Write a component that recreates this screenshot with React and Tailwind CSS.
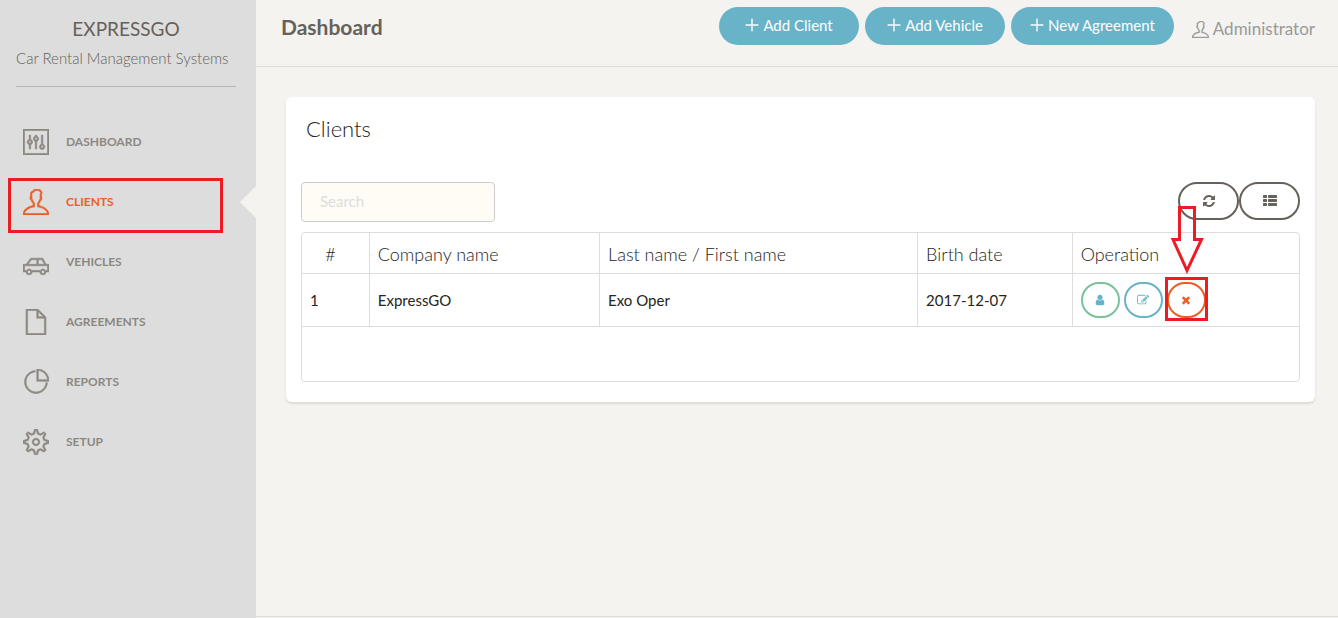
import React from "react";
import {
  TfiPanel,
  TfiUser,
  TfiCar,
  TfiFile,
  TfiPieChart,
  TfiSettings,
  TfiPlus,
} from "react-icons/tfi";

const menu = [
  { label: "DASHBOARD", Icon: TfiPanel },
  { label: "CLIENTS", Icon: TfiUser, active: true },
  { label: "VEHICLES", Icon: TfiCar },
  { label: "AGREEMENTS", Icon: TfiFile },
  { label: "REPORTS", Icon: TfiPieChart },
  { label: "SETUP", Icon: TfiSettings },
];

const actions = ["Add Client", "Add Vehicle", "New Agreement"];

const clients = [
  { id: 1, company: "ExpressGO", name: "Exo Oper", birth: "2017-12-07" },
];

const glyphs = {
  refresh:
    "M1639 1056q0 5-1 7-64 268-268 434.5t-478 166.5q-146 0-282.5-55t-243.5-157l-129 129q-19 19-45 19t-45-19-19-45v-448q0-26 19-45t45-19h448q26 0 45 19t19 45-19 45l-137 137q71 66 161 102t187 36q134 0 250-65t186-179q11-17 53-117 8-23 30-23h192q13 0 22.5 9.5t9.5 22.5zm25-800v448q0 26-19 45t-45 19h-448q-26 0-45-19t-19-45 19-45l138-138q-148-137-349-137-134 0-250 65t-186 179q-11 17-53 117-8 23-30 23h-199q-13 0-22.5-9.5t-9.5-22.5v-7q65-268 270-434.5t480-166.5q146 0 284 55.5t245 156.5l130-129q19-19 45-19t45 19 19 45z",
  list: "M512 1248v192q0 40-28 68t-68 28h-320q-40 0-68-28t-28-68v-192q0-40 28-68t68-28h320q40 0 68 28t28 68zm0-512v192q0 40-28 68t-68 28h-320q-40 0-68-28t-28-68v-192q0-40 28-68t68-28h320q40 0 68 28t28 68zm1280 512v192q0 40-28 68t-68 28h-960q-40 0-68-28t-28-68v-192q0-40 28-68t68-28h960q40 0 68 28t28 68zm-1280-1024v192q0 40-28 68t-68 28h-320q-40 0-68-28t-28-68v-192q0-40 28-68t68-28h320q40 0 68 28t28 68zm1280 512v192q0 40-28 68t-68 28h-960q-40 0-68-28t-28-68v-192q0-40 28-68t68-28h960q40 0 68 28t28 68zm0-512v192q0 40-28 68t-68 28h-960q-40 0-68-28t-28-68v-192q0-40 28-68t68-28h960q40 0 68 28t28 68z",
  user: "M1536 1399q0 109-62.5 187t-150.5 78h-854q-88 0-150.5-78t-62.5-187q0-85 8.5-160.5t31.5-152 58.5-131 94-89 134.5-34.5q131 128 313 128t313-128q76 0 134.5 34.5t94 89 58.5 131 31.5 152 8.5 160.5zm-256-887q0 159-112.5 271.5t-271.5 112.5-271.5-112.5-112.5-271.5 112.5-271.5 271.5-112.5 271.5 112.5 112.5 271.5z",
  edit: "M888 1184l116-116-152-152-116 116v56h96v96h56zm440-720q-16-16-33 1l-350 350q-17 17-1 33t33-1l350-350q17-17 1-33zm80 594v190q0 119-84.5 203.5t-203.5 84.5h-832q-119 0-203.5-84.5t-84.5-203.5v-832q0-119 84.5-203.5t203.5-84.5h832q63 0 117 25 15 7 18 23 3 17-9 29l-49 49q-14 14-32 8-23-6-45-6h-832q-66 0-113 47t-47 113v832q0 66 47 113t113 47h832q66 0 113-47t47-113v-126q0-13 9-22l64-64q15-15 35-7t20 29zm-96-738l288 288-672 672h-288v-288zm444 132l-92 92-288-288 92-92q28-28 68-28t68 28l152 152q28 28 28 68t-28 68z",
  remove:
    "M1490 1322q0 40-28 68l-136 136q-28 28-68 28t-68-28l-294-294-294 294q-28 28-68 28t-68-28l-136-136q-28-28-28-68t28-68l294-294-294-294q-28-28-28-68t28-68l136-136q28-28 68-28t68 28l294 294 294-294q28-28 68-28t68 28l136 136q28 28 28 68t-28 68l-294 294 294 294q28 28 28 68z",
};

function Glyph({ name, className }) {
  return (
    <svg viewBox="0 0 1792 1792" fill="currentColor" aria-hidden="true" className={className}>
      <path d={glyphs[name]} />
    </svg>
  );
}

function Sidebar() {
  return (
    <aside className="w-64 shrink-0 bg-[#dddddd]">
      <div className="ml-4 mr-5 border-b border-[#b5b5b5] pt-4 pb-4 text-[#66615b]">
        <div className="text-center text-[19px] leading-[26px]">EXPRESSGO</div>
        <div className="whitespace-nowrap pt-1 text-[15px] leading-6 font-light">
          Car Rental Management Systems
        </div>
      </div>
      <nav className="pt-[25px]">
        {menu.map(({ label, Icon, active }) => (
          <a
            key={label}
            href="#"
            className={
              active
                ? "relative flex h-[60px] items-center gap-[17px] pl-[23px] text-xs font-bold text-[#eb5e28]"
                : "flex h-[60px] items-center gap-[17px] pl-[23px] text-xs font-bold text-[#8c8881]"
            }
          >
            <Icon className="size-[26px] shrink-0 [stroke-width:0.4]" />
            <span>{label}</span>
            {active && (
              <>
                <span className="absolute inset-y-[14px] right-0 w-4 bg-[#f4f3ef] [clip-path:polygon(100%_0,100%_100%,0_50%)]" />
                <span className="absolute top-[6px] left-2 h-[55px] w-[215px] border-3 border-[#ed1c24]" />
              </>
            )}
          </a>
        ))}
      </nav>
    </aside>
  );
}

function Header() {
  return (
    <header className="flex h-[67px] items-start justify-between border-b border-[#dddddd] pr-[23px] pl-[25px]">
      <h1 className="pt-3 text-[21px] leading-[30px] font-bold text-[#66615b]">Dashboard</h1>
      <div className="flex items-start pt-[7px]">
        <div className="flex gap-1.5">
          {actions.map((label) => (
            <button
              key={label}
              type="button"
              className="flex h-[38px] min-w-[140px] items-center justify-center gap-1 rounded-[20px] bg-[#68b3c8] px-[19px] pb-0.5 text-[15px] text-white"
            >
              <TfiPlus className="size-[14px] [stroke-width:0.6]" />
              {label}
            </button>
          ))}
        </div>
        <a href="#" className="ml-[18px] flex h-11 items-center gap-1 text-[17px] text-[#9a9a9a]">
          <TfiUser className="size-[17px] [stroke-width:0.4]" />
          Administrator
        </a>
      </div>
    </header>
  );
}

const cell = "border-r border-b border-[#dddddd] px-2 last:border-r-0";
const head = "border-r border-b border-[#dddddd] px-2 pt-0.5 font-light last:border-r-0";

function ClientTable() {
  return (
    <div className="mt-[10px] rounded border border-[#dddddd] pb-[54px]">
      <table className="w-full table-fixed border-separate border-spacing-0 text-left text-[#252422]">
        <colgroup>
          <col className="w-[6.8%]" />
          <col className="w-[23.1%]" />
          <col className="w-[31.9%]" />
          <col className="w-[15.5%]" />
          <col />
        </colgroup>
        <thead>
          <tr className="h-[41px] text-lg leading-6">
            <th className={`${head} pr-[18px] text-center`}>#</th>
            <th className={head}>Company name</th>
            <th className={head}>Last name / First name</th>
            <th className={head}>Birth date</th>
            <th className={head}>Operation</th>
          </tr>
        </thead>
        <tbody>
          {clients.map((c) => (
            <tr key={c.id} className="h-[53px] text-[15px]">
              <td className={cell}>{c.id}</td>
              <td className={cell}>{c.company}</td>
              <td className={cell}>{c.name}</td>
              <td className={cell}>{c.birth}</td>
              <td className={cell}>
                <div className="flex gap-1">
                  <button
                    type="button"
                    aria-label="View client"
                    className="flex h-9 w-[39px] items-center justify-center rounded-[20px] border-2 border-[#7ac29a] text-[#68b3c8]"
                  >
                    <Glyph name="user" className="size-3" />
                  </button>
                  <button
                    type="button"
                    aria-label="Edit client"
                    className="flex h-9 w-[39px] items-center justify-center rounded-[20px] border-2 border-[#68b3c8] text-[#68b3c8]"
                  >
                    <Glyph name="edit" className="size-3" />
                  </button>
                  <div className="relative">
                    <button
                      type="button"
                      aria-label="Delete client"
                      className="flex h-9 w-[39px] items-center justify-center rounded-[20px] border-2 border-[#eb5e28] text-[#eb5e28]"
                    >
                      <Glyph name="remove" className="size-3" />
                    </button>
                    <span className="pointer-events-none absolute -top-[5px] -left-[2px] h-11 w-[43px] border-3 border-[#ed1c24]" />
                    <svg
                      viewBox="0 0 34 70"
                      fill="none"
                      stroke="#ed1c24"
                      strokeWidth="3"
                      aria-hidden="true"
                      className="pointer-events-none absolute -top-[78px] left-[3px] h-[70px] w-[34px]"
                    >
                      <path d="M9.5 3.500H24.500V35.500H31.500L17 66.500L3 35.500H9.500Z" />
                    </svg>
                  </div>
                </div>
              </td>
            </tr>
          ))}
        </tbody>
      </table>
    </div>
  );
}

export default function App() {
  return (
    <div className="flex min-h-screen bg-[#f4f3ef] font-['Lato','Noto_Sans',sans-serif]">
      <Sidebar />
      <div className="flex min-w-0 flex-1 flex-col">
        <Header />
        <main className="mb-px flex-1 border-b border-[#dddddd] pt-[30px] pr-[23px] pl-[30px]">
          <section className="rounded-md bg-white px-[15px] pt-[17px] pb-5 shadow-[0_2px_2px_rgba(204,197,185,0.5)]">
            <h2 className="pl-[5px] text-[22px] leading-[30px] font-light text-[#252422]">Clients</h2>
            <div className="mt-[38px] flex items-start justify-between">
              <input
                type="text"
                aria-label="Search"
                placeholder="Search"
                className="h-10 w-[194px] rounded border border-[#cccccc] bg-[#fffcf5] px-[18px] pb-0.5 text-[15px] placeholder:text-[#dddddd]"
              />
              <div className="flex text-[#66615b]">
                <button
                  type="button"
                  aria-label="Refresh"
                  className="flex h-[38px] w-[61px] items-center justify-center rounded-[20px] border-2 border-[#66615b]"
                >
                  <Glyph name="refresh" className="size-[14px]" />
                </button>
                <button
                  type="button"
                  aria-label="Columns"
                  className="flex h-[38px] w-[61px] items-center justify-center rounded-[20px] border-2 border-[#66615b]"
                >
                  <Glyph name="list" className="size-[14px]" />
                </button>
              </div>
            </div>
            <ClientTable />
          </section>
        </main>
      </div>
    </div>
  );
}
